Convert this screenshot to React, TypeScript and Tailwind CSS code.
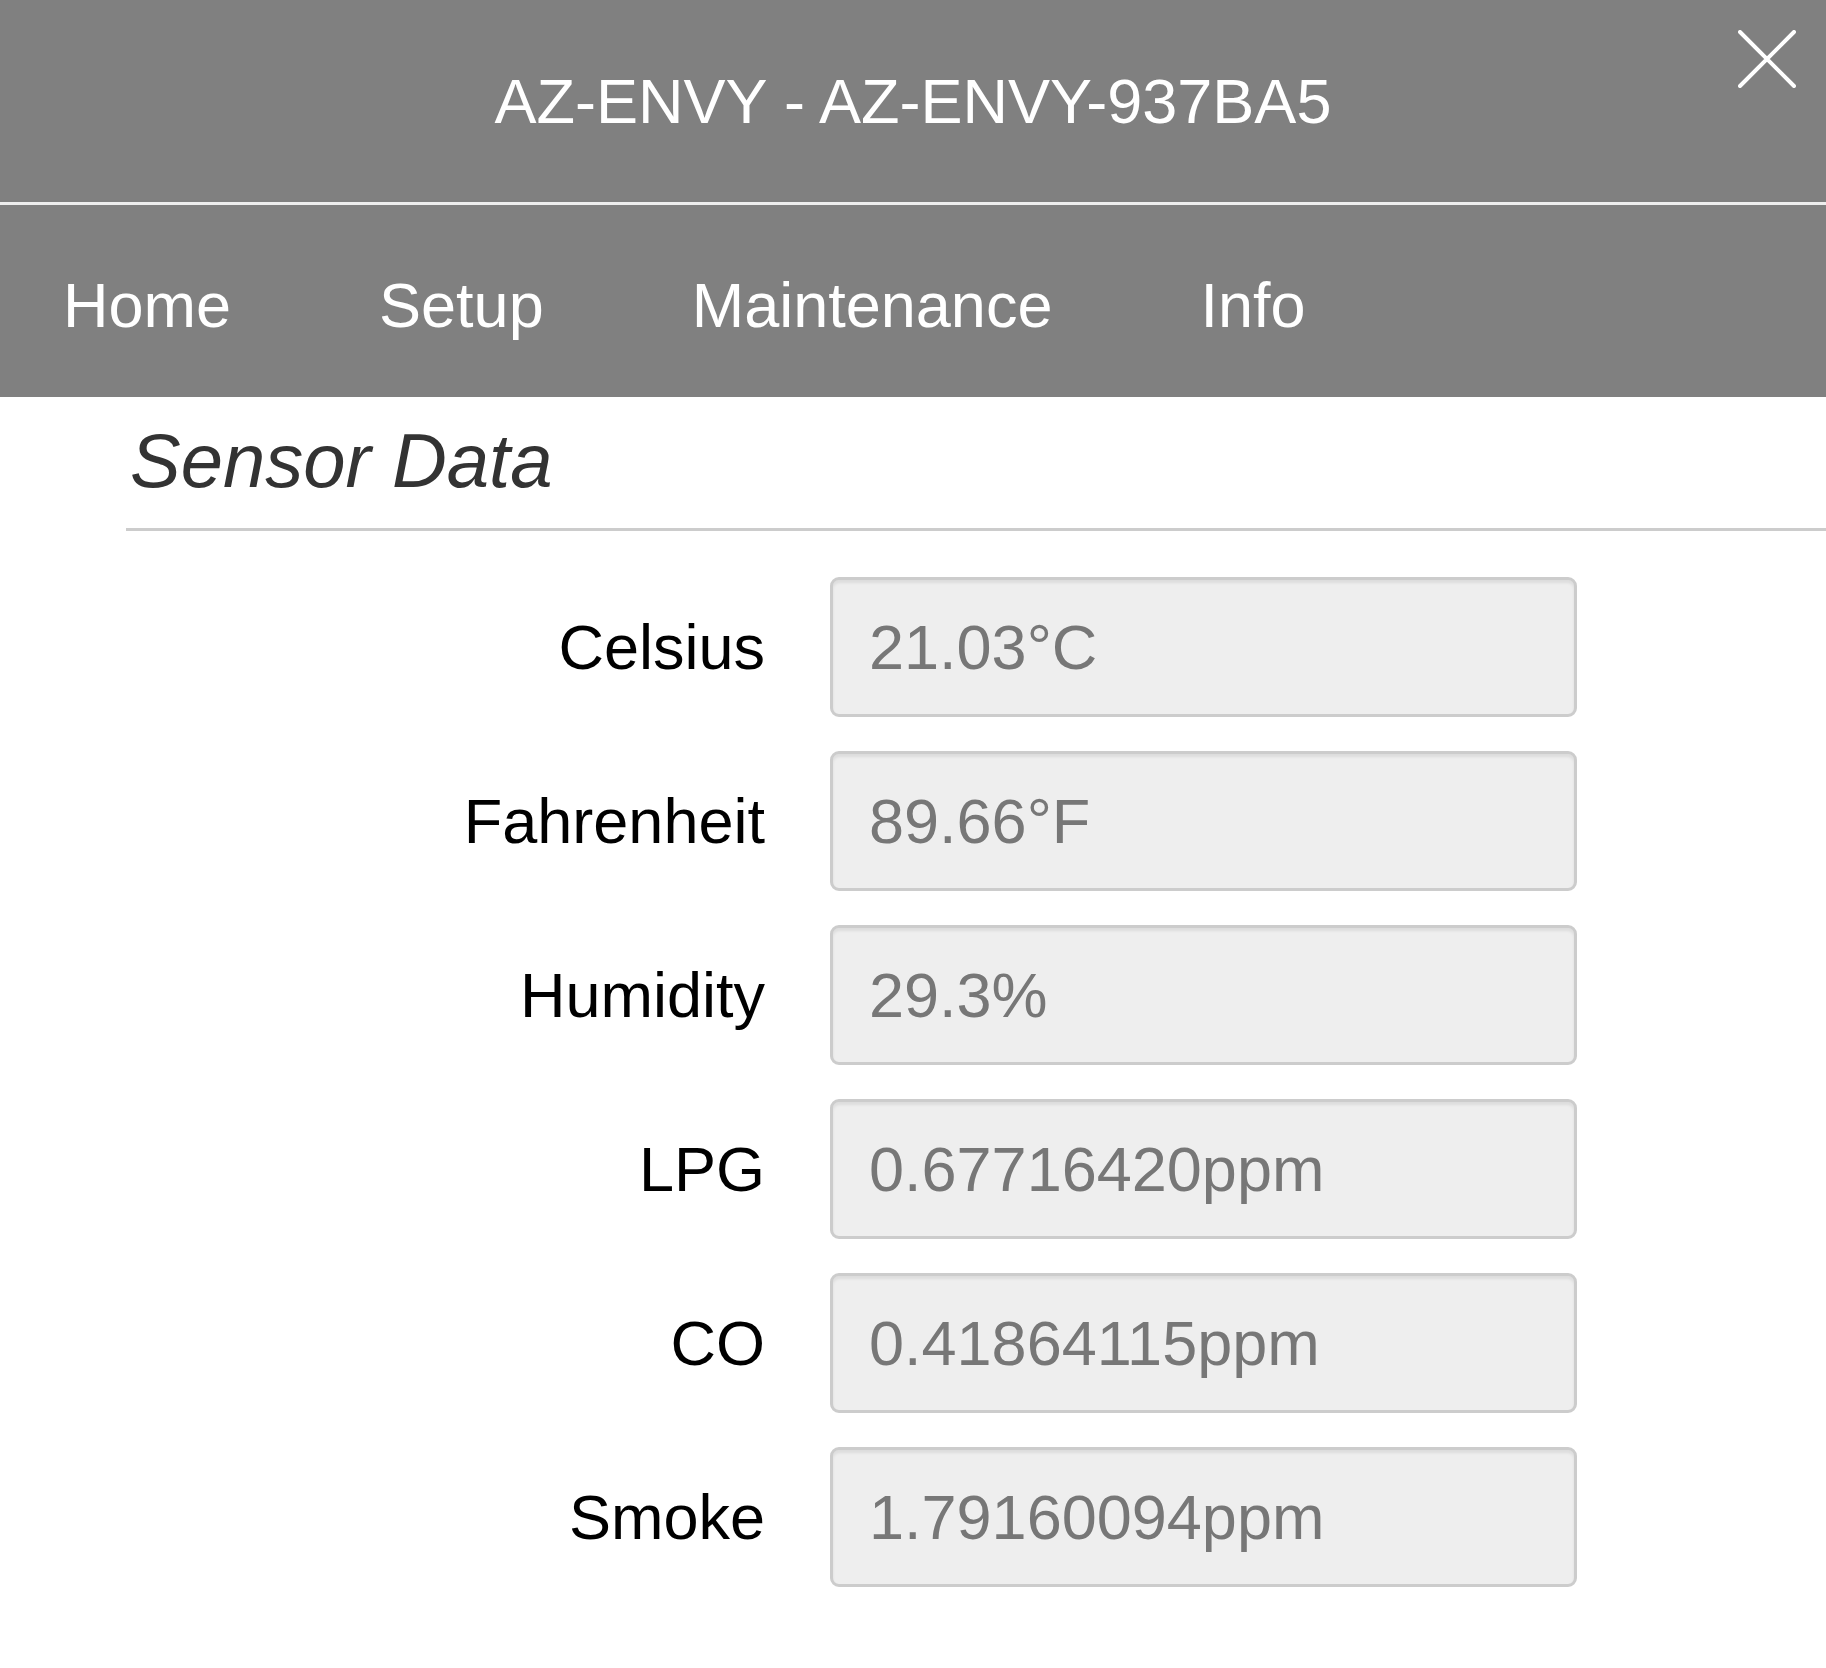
import React from 'react';

const rows = [
  { label: 'Celsius', value: '21.03°C' },
  { label: 'Fahrenheit', value: '89.66°F' },
  { label: 'Humidity', value: '29.3%' },
  { label: 'LPG', value: '0.67716420ppm' },
  { label: 'CO', value: '0.41864115ppm' },
  { label: 'Smoke', value: '1.79160094ppm' },
];

export default function App() {
  return (
    <div className="relative min-h-[1668px] w-full bg-white font-['Liberation_Sans',Arial,sans-serif]">
      {/* Title bar */}
      <header className="relative flex h-[202px] items-center justify-center bg-[#808080]">
        <h1 className="text-[63px] leading-none text-white">AZ-ENVY - AZ-ENVY-937BA5</h1>
        <button className="absolute right-[30px] top-[30px] h-[58px] w-[58px]" aria-label="Close">
          <svg viewBox="0 0 58 58" className="h-full w-full" fill="none" stroke="white" strokeWidth="4" strokeLinecap="round">
            <path d="M2 2 L56 56 M56 2 L2 56" />
          </svg>
        </button>
      </header>
      <div className="h-[3px] bg-[#eeeeee]" />

      {/* Nav */}
      <nav className="flex h-[192px] items-center gap-[148px] bg-[#808080] pl-[63px] pt-[8px] text-[63px] leading-none text-white">
        <span>Home</span>
        <span>Setup</span>
        <span>Maintenance</span>
        <span>Info</span>
      </nav>

      {/* Content */}
      <main className="pl-[126px]">
        <div className="flex h-[134px] items-center border-b-[3px] border-[#cccccc] pl-[4px] pb-[4px]">
          <h2 className="text-[76px] italic leading-none text-[#333333]">Sensor Data</h2>
        </div>

        <div className="mt-[46px] flex flex-col gap-[34px]">
          {rows.map((r) => (
            <div key={r.label} className="flex items-center">
              <label className="w-[704px] pr-[65px] text-right text-[63px] leading-none text-black">{r.label}</label>
              <div className="flex h-[140px] w-[747px] items-center rounded-[9px] border-[3px] border-[#cccccc] bg-[#eeeeee] pl-[36px] text-[63px] leading-none text-[#777777] shadow-[inset_0_3px_3px_rgba(0,0,0,0.075)]">
                {r.value}
              </div>
            </div>
          ))}
        </div>
      </main>
    </div>
  );
}
